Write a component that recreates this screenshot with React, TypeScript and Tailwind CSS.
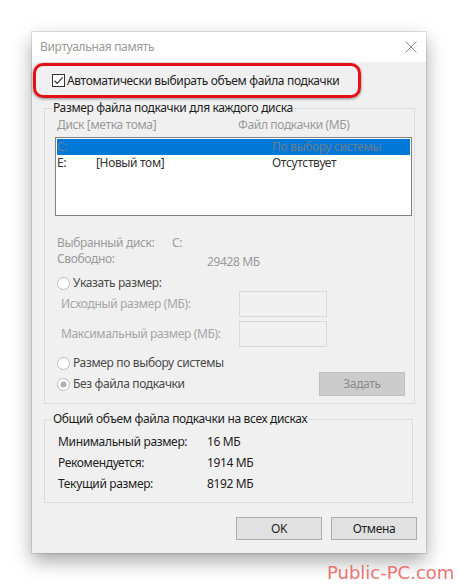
import React from 'react'

const Radio = ({ checked = false }: { checked?: boolean }) => (
  <svg width="13" height="13" viewBox="0 0 13 13" className="shrink-0">
    <circle cx="6.5" cy="6.5" r="6" fill="#fff" stroke="#bcbcbc" />
    {checked && <circle cx="6.5" cy="6.5" r="3" fill="#b0b0b0" />}
  </svg>
)

const Checkbox = () => (
  <svg width="13" height="13" viewBox="0 0 13 13" className="shrink-0">
    <rect x="0.5" y="0.5" width="12" height="12" fill="#fff" stroke="#333" />
    <path d="M2.5 6.8 L5.2 9.3 L10.6 3.4" fill="none" stroke="#333" strokeWidth="1.2" />
  </svg>
)

const Field = () => <div className="w-[88px] h-[26px] border border-[#d9d9d9] bg-[#f0f0f0]" />

export default function App() {
  return (
    <div className="w-[458px] h-[586px] bg-white relative overflow-hidden font-['Noto_Sans',sans-serif] text-[12px] leading-4 tracking-[-0.35px] text-[#1e1e1e]">
      <div className="pt-8 pl-8">
        <div className="w-[394px] h-[521px] bg-[#f0f0f0] flex flex-col shadow-[0_0_0_1px_rgba(0,0,0,0.1),0_8px_18px_rgba(0,0,0,0.35)]">
          {/* title bar */}
          <div className="h-[30px] bg-white flex items-center justify-between pl-2 pr-[9px]">
            <span className="text-[#9a9a9a]">Виртуальная память</span>
            <svg width="12" height="12" viewBox="0 0 12 12">
              <path d="M0.5 0.5 L11.5 11.5 M11.5 0.5 L0.5 11.5" stroke="#8a8a8a" strokeWidth="1" />
            </svg>
          </div>

          <div className="flex flex-col">
            <div className="ml-px mt-px w-[328px] h-[35px] rounded-[10px] border-[3px] border-[#e3101a] flex items-center pl-4 gap-[2px] shadow-[0_1px_3px_rgba(0,0,0,0.45)]">
              <Checkbox />
              <span>Автоматически выбирать объем файла подкачки</span>
            </div>

            <fieldset className="ml-3 mt-[2px] w-[371px] h-[304px] border border-[#dcdcdc]">
              <legend className="ml-[7px] px-[1px]">Размер файла подкачки для каждого диска</legend>
              <div className="mt-px pl-3 h-4 flex text-[#9a9a9a]">
                <span className="w-[181px]">Диск [метка тома]</span>
                <span>Файл подкачки (МБ)</span>
              </div>
              <div className="mt-1 ml-[10px] w-[357px] h-[79px] border border-[#828282] bg-white p-px">
                <div className="h-4 flex items-center bg-[#0078d7] text-[#6b7c8e]">
                  <span className="w-[39px]">C:</span>
                  <span className="w-[176px]"></span>
                  <span>По выбору системы</span>
                </div>
                <div className="h-4 flex items-center text-[#333]">
                  <span className="w-[39px]">E:</span>
                  <span className="w-[176px]">[Новый том]</span>
                  <span>Отсутствует</span>
                </div>
              </div>

              <div className="mt-[19px] pl-3 h-4 flex text-[#9a9a9a]">
                <span className="w-[115px]">Выбранный диск:</span>
                <span>C:</span>
              </div>
              <div className="pl-3 h-4 flex text-[#9a9a9a]">
                <span className="w-[150px]">Свободно:</span>
                <span className="mt-[3px]">29428 МБ</span>
              </div>

              <div className="mt-2 pl-3 h-4 flex items-center gap-[3px] text-[#4a4a4a]">
                <Radio />
                <span>Указать размер:</span>
              </div>
              <div className="pl-4 h-[26px] flex items-center text-[#a5a5a5]">
                <span className="w-[178px]">Исходный размер (МБ):</span>
                <Field />
              </div>
              <div className="mt-1 pl-4 h-[26px] flex items-center text-[#a5a5a5]">
                <span className="w-[178px]">Максимальный размер (МБ):</span>
                <Field />
              </div>

              <div className="mt-2 pl-3 h-4 flex items-center gap-[3px] text-[#4a4a4a]">
                <Radio />
                <span>Размер по выбору системы</span>
              </div>
              <div className="mt-px pl-3 pr-[9px] h-6 flex items-center justify-between">
                <div className="flex items-center gap-[3px] text-[#4a4a4a]">
                  <Radio checked />
                  <span>Без файла подкачки</span>
                </div>
                <div className="w-[86px] h-6 bg-[#cccccc] border border-[#bfbfbf] flex items-center justify-center text-[#8c8c8c]">
                  Задать
                </div>
              </div>
            </fieldset>

            <fieldset className="ml-3 mt-[7px] w-[369px] h-[92px] border border-[#dcdcdc]">
              <legend className="ml-[7px] px-[1px]">Общий объем файла подкачки на всех дисках</legend>
              <div className="mt-[7px] pl-[13px] flex flex-col gap-[5px]">
                <div className="h-4 flex">
                  <span className="w-[149px]">Минимальный размер:</span>
                  <span>16 МБ</span>
                </div>
                <div className="h-4 flex">
                  <span className="w-[149px]">Рекомендуется:</span>
                  <span>1914 МБ</span>
                </div>
                <div className="h-4 flex">
                  <span className="w-[149px]">Текущий размер:</span>
                  <span>8192 МБ</span>
                </div>
              </div>
            </fieldset>

            <div className="mt-[14px] pr-[9px] flex justify-end gap-[9px]">
              <div className="w-[86px] h-[23px] bg-[#e1e1e1] border border-[#adadad] flex items-center justify-center">
                OK
              </div>
              <div className="w-[86px] h-[23px] bg-[#e1e1e1] border border-[#adadad] flex items-center justify-center">
                Отмена
              </div>
            </div>
          </div>
        </div>
      </div>

      <span className="absolute left-[327px] top-[562px] font-['DejaVu_Sans',sans-serif] text-[18px] leading-[22px] tracking-normal text-[#ec7474] whitespace-nowrap">
        Public-PC.com
      </span>
    </div>
  )
}
